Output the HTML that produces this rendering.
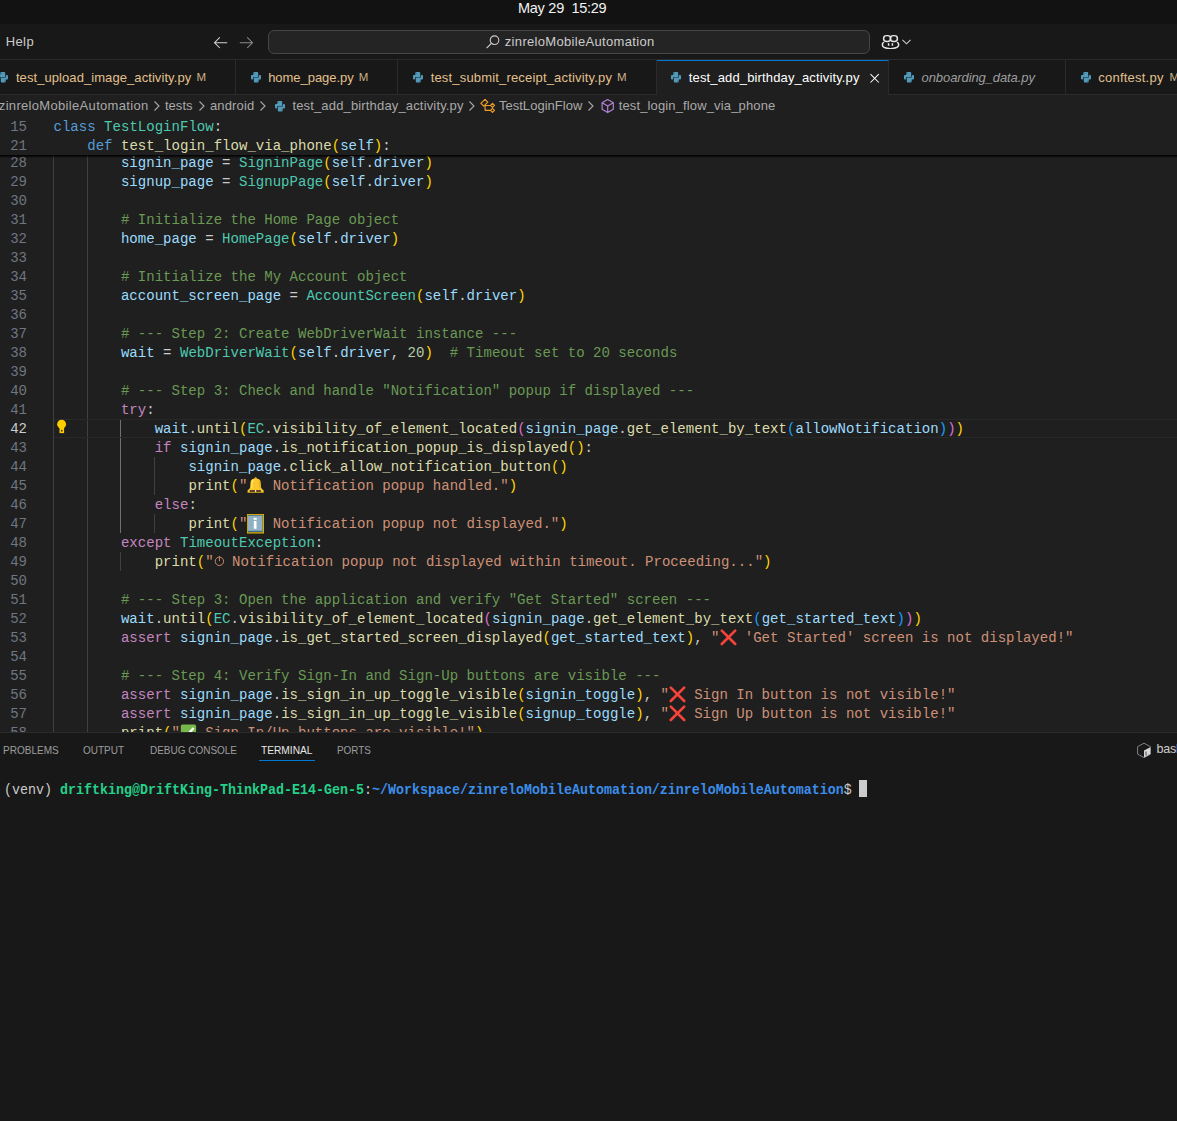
<!DOCTYPE html>
<html><head><meta charset="utf-8">
<style>
*{margin:0;padding:0;box-sizing:border-box}
html,body{width:1177px;height:1121px;overflow:hidden;background:#181818}
body{position:relative;font-family:"Liberation Sans",sans-serif;color:#cccccc}
.a{position:absolute;white-space:pre}
#top{left:0;top:0;width:1177px;height:24px;background:#121212}
#title{left:0;top:24px;width:1177px;height:36px;background:#181818;border-bottom:1px solid #2b2b2b}
#tabs{left:0;top:60px;width:1177px;height:35px;background:#181818;border-bottom:1px solid #2b2b2b}
.tab{position:absolute;top:60px;height:34px;border-right:1px solid #2b2b2b;background:#181818}
.tab.act{background:#1f1f1f;border-top:1px solid #0078d4;height:35px}
.ui{position:absolute;white-space:pre;font-size:13px;line-height:16px}
.tl{color:#e2c08d}
.mk{color:#c9b088;font-size:11.5px}
#crumb{left:0;top:95px;width:1177px;height:22px;background:#1f1f1f}
.bc{color:#a9a9a9}
#editor{left:0;top:116px;width:1177px;height:616px;background:#1f1f1f}
#panel{left:0;top:732px;width:1177px;height:389px;background:#181818;border-top:1px solid #2b2b2b;z-index:5}
.ln,.cl{position:absolute;font-family:"Liberation Mono",monospace;font-size:14.05px;line-height:19px;height:19px;white-space:pre}
.ln{left:0;width:27px;text-align:right;color:#6e7681}
.ln.act{color:#cccccc}
.cl{left:53.5px;color:#cccccc}
.k{color:#569cd6}.c{color:#c586c0}.t{color:#4ec9b0}.f{color:#dcdcaa}.v{color:#9cdcfe}.s{color:#ce9178}.m{color:#6a9955}.n{color:#b5cea8}
.b1{color:#ffd700}.b2{color:#da70d6}.b3{color:#179fff}
.emo{display:inline-block;width:16.84px;height:19px;vertical-align:top;position:relative}
.emo1{display:inline-block;width:9.9px;height:19px;vertical-align:top;position:relative}
.emo svg,.emo1 svg{position:absolute;left:0;top:0}
.g{position:absolute;width:1px;background:#404040}
.g.act{background:#707070}
#sticky{left:0;top:117px;width:1177px;height:38px;background:#1f1f1f;z-index:3}
#shadow{left:0;top:155px;width:1177px;height:3px;background:linear-gradient(#000 0%,rgba(0,0,0,.55) 50%,rgba(0,0,0,0));z-index:3}
.pt{position:absolute;top:743px;font-size:11px;line-height:14px;color:#9d9d9d;white-space:pre}
.term{position:absolute;font-family:"Liberation Mono",monospace;font-size:13.33px;line-height:18px;white-space:pre;z-index:6;transform:scaleY(1.15);transform-origin:0 12.3px}
</style></head><body>
<div class="a" id="top"></div>
<div class="ui" style="left:518.0px;top:-0.3px;font-size:14.5px;color:#f2f2f2;letter-spacing:-0.269px">May 29  15:29</div>

<div class="a" id="title"></div>
<div class="ui" style="left:5.7px;top:34px;color:#cccccc;letter-spacing:0.398px">Help</div>
<svg class="a" style="left:213px;top:34.5px" width="16" height="16" viewBox="0 0 16 16"><path d="M6.8 2.4L1.5 7.7 6.8 13M1.5 7.7H14.2" stroke="#d0d0d0" stroke-width="1.05" fill="none"/></svg>
<svg class="a" style="left:238px;top:34.5px" width="16" height="16" viewBox="0 0 16 16"><path d="M9.2 2.4L14.5 7.7 9.2 13M14.5 7.7H1.8" stroke="#8a8a8a" stroke-width="1.05" fill="none"/></svg>
<div class="a" style="left:268px;top:30px;width:602px;height:24px;border:1px solid #464646;border-radius:6px;background:#242424"></div>
<svg class="a" style="left:485px;top:34px" width="16" height="16" viewBox="0 0 16 16"><circle cx="9.5" cy="6.2" r="4.3" stroke="#cccccc" stroke-width="1.1" fill="none"/><path d="M6.4 9.3L1.6 14.1" stroke="#cccccc" stroke-width="1.2"/></svg>
<div class="ui" style="left:504.8px;top:34px;color:#cccccc;letter-spacing:0.322px">zinreloMobileAutomation</div>
<svg class="a" style="left:881px;top:34px" width="19" height="15" viewBox="0 0 19 17" preserveAspectRatio="none"><path d="M3 9.2C2 9.7 1.4 10.6 1.4 11.7v.9c0 1.1.7 2 1.7 2.5 1.9 1 4 1.4 6.4 1.4s4.5-.4 6.4-1.4c1-.5 1.7-1.4 1.7-2.5v-.9c0-1.1-.6-2-1.6-2.5" fill="none" stroke="#e6e6e6" stroke-width="1.5"/><rect x="2.6" y="1.9" width="7" height="6.6" rx="3.1" fill="none" stroke="#e6e6e6" stroke-width="1.5"/><rect x="9.4" y="1.9" width="7" height="6.6" rx="3.1" fill="none" stroke="#e6e6e6" stroke-width="1.5"/><path d="M7.6 10.6v2.6M11.4 10.6v2.6" stroke="#e6e6e6" stroke-width="1.5"/></svg>
<svg class="a" style="left:901px;top:37px" width="11" height="9" viewBox="0 0 11 9"><path d="M1.5 2.8L5.5 6.8 9.5 2.8" stroke="#cccccc" stroke-width="1.1" fill="none"/></svg>

<div class="a" id="tabs"></div>
<div class="tab" style="left:-20px;width:256px"></div>
<div class="tab" style="left:236px;width:162px"></div>
<div class="tab" style="left:398px;width:259px"></div>
<div class="tab act" style="left:657px;width:232px"></div>
<div class="tab" style="left:889px;width:177px"></div>
<div class="tab" style="left:1066px;width:134px"></div>
<svg class="a" style="left:-4.8px;top:68.7px" width="16" height="16" viewBox="0 0 16 16"><path d="M5.3 4Q5.3 3 6.3 3H9.2Q10.2 3 10.2 4V8H5.2V9.6Q5.2 10.5 4.3 10.5H3.9Q3 10.5 3 9.6V6.9Q3 6 3.9 6H5.3Z" fill="#519aba"/><path d="M10.7 12.5Q10.7 13.5 9.7 13.5H6.8Q5.8 13.5 5.8 12.5V8.5H10.8V6.9Q10.8 6 11.7 6H12.1Q13 6 13 6.9V9.6Q13 10.5 12.1 10.5H10.7Z" fill="#519aba"/><circle cx="6.4" cy="4.2" r=".45" fill="#2a4a5a"/><circle cx="9.6" cy="12.3" r=".45" fill="#2a4a5a"/></svg>
<div class="ui tl" style="left:15.9px;top:70px;letter-spacing:0.075px">test_upload_image_activity.py</div>
<div class="ui mk" style="left:196.6px;top:69.3px">M</div>
<svg class="a" style="left:247.5px;top:68.7px" width="16" height="16" viewBox="0 0 16 16"><path d="M5.3 4Q5.3 3 6.3 3H9.2Q10.2 3 10.2 4V8H5.2V9.6Q5.2 10.5 4.3 10.5H3.9Q3 10.5 3 9.6V6.9Q3 6 3.9 6H5.3Z" fill="#519aba"/><path d="M10.7 12.5Q10.7 13.5 9.7 13.5H6.8Q5.8 13.5 5.8 12.5V8.5H10.8V6.9Q10.8 6 11.7 6H12.1Q13 6 13 6.9V9.6Q13 10.5 12.1 10.5H10.7Z" fill="#519aba"/><circle cx="6.4" cy="4.2" r=".45" fill="#2a4a5a"/><circle cx="9.6" cy="12.3" r=".45" fill="#2a4a5a"/></svg>
<div class="ui tl" style="left:268.2px;top:70px;letter-spacing:-0.046px">home_page.py</div>
<div class="ui mk" style="left:358.8px;top:69.3px">M</div>
<svg class="a" style="left:409.7px;top:68.7px" width="16" height="16" viewBox="0 0 16 16"><path d="M5.3 4Q5.3 3 6.3 3H9.2Q10.2 3 10.2 4V8H5.2V9.6Q5.2 10.5 4.3 10.5H3.9Q3 10.5 3 9.6V6.9Q3 6 3.9 6H5.3Z" fill="#519aba"/><path d="M10.7 12.5Q10.7 13.5 9.7 13.5H6.8Q5.8 13.5 5.8 12.5V8.5H10.8V6.9Q10.8 6 11.7 6H12.1Q13 6 13 6.9V9.6Q13 10.5 12.1 10.5H10.7Z" fill="#519aba"/><circle cx="6.4" cy="4.2" r=".45" fill="#2a4a5a"/><circle cx="9.6" cy="12.3" r=".45" fill="#2a4a5a"/></svg>
<div class="ui tl" style="left:430.7px;top:70px;letter-spacing:0.171px">test_submit_receipt_activity.py</div>
<div class="ui mk" style="left:617px;top:69.3px">M</div>
<svg class="a" style="left:668px;top:68.7px" width="16" height="16" viewBox="0 0 16 16"><path d="M5.3 4Q5.3 3 6.3 3H9.2Q10.2 3 10.2 4V8H5.2V9.6Q5.2 10.5 4.3 10.5H3.9Q3 10.5 3 9.6V6.9Q3 6 3.9 6H5.3Z" fill="#519aba"/><path d="M10.7 12.5Q10.7 13.5 9.7 13.5H6.8Q5.8 13.5 5.8 12.5V8.5H10.8V6.9Q10.8 6 11.7 6H12.1Q13 6 13 6.9V9.6Q13 10.5 12.1 10.5H10.7Z" fill="#519aba"/><circle cx="6.4" cy="4.2" r=".45" fill="#2a4a5a"/><circle cx="9.6" cy="12.3" r=".45" fill="#2a4a5a"/></svg>
<div class="ui" style="left:688.8px;top:70px;color:#ffffff;letter-spacing:0.143px">test_add_birthday_activity.py</div>
<svg class="a" style="left:867px;top:69.6px" width="16" height="16" viewBox="0 0 16 16"><path d="M3.5 4.2L11.8 12.5M11.8 4.2L3.5 12.5" stroke="#ffffff" stroke-width="1.05"/></svg>
<svg class="a" style="left:901px;top:68.7px" width="16" height="16" viewBox="0 0 16 16"><path d="M5.3 4Q5.3 3 6.3 3H9.2Q10.2 3 10.2 4V8H5.2V9.6Q5.2 10.5 4.3 10.5H3.9Q3 10.5 3 9.6V6.9Q3 6 3.9 6H5.3Z" fill="#519aba"/><path d="M10.7 12.5Q10.7 13.5 9.7 13.5H6.8Q5.8 13.5 5.8 12.5V8.5H10.8V6.9Q10.8 6 11.7 6H12.1Q13 6 13 6.9V9.6Q13 10.5 12.1 10.5H10.7Z" fill="#519aba"/><circle cx="6.4" cy="4.2" r=".45" fill="#2a4a5a"/><circle cx="9.6" cy="12.3" r=".45" fill="#2a4a5a"/></svg>
<div class="ui" style="left:921.6px;top:70px;color:#9d9d9d;font-style:italic;letter-spacing:-0.096px">onboarding_data.py</div>
<svg class="a" style="left:1077.6px;top:68.7px" width="16" height="16" viewBox="0 0 16 16"><path d="M5.3 4Q5.3 3 6.3 3H9.2Q10.2 3 10.2 4V8H5.2V9.6Q5.2 10.5 4.3 10.5H3.9Q3 10.5 3 9.6V6.9Q3 6 3.9 6H5.3Z" fill="#519aba"/><path d="M10.7 12.5Q10.7 13.5 9.7 13.5H6.8Q5.8 13.5 5.8 12.5V8.5H10.8V6.9Q10.8 6 11.7 6H12.1Q13 6 13 6.9V9.6Q13 10.5 12.1 10.5H10.7Z" fill="#519aba"/><circle cx="6.4" cy="4.2" r=".45" fill="#2a4a5a"/><circle cx="9.6" cy="12.3" r=".45" fill="#2a4a5a"/></svg>
<div class="ui tl" style="left:1098.3px;top:70px;letter-spacing:0.223px">conftest.py</div>
<div class="ui mk" style="left:1169.4px;top:69.3px">M</div>

<div class="a" id="crumb"></div>
<div class="ui bc" style="left:-1.2px;top:98px;letter-spacing:0.322px">zinreloMobileAutomation</div>
<svg class="a" style="left:153px;top:99px" width="8" height="14" viewBox="0 0 8 14"><path d="M1.5 2.5L6 7 1.5 11.5" stroke="#a9a9a9" stroke-width="1.1" fill="none"/></svg>
<div class="ui bc" style="left:165px;top:98px;letter-spacing:0.012px">tests</div>
<svg class="a" style="left:198px;top:99px" width="8" height="14" viewBox="0 0 8 14"><path d="M1.5 2.5L6 7 1.5 11.5" stroke="#a9a9a9" stroke-width="1.1" fill="none"/></svg>
<div class="ui bc" style="left:210px;top:98px;letter-spacing:0.144px">android</div>
<svg class="a" style="left:259px;top:99px" width="8" height="14" viewBox="0 0 8 14"><path d="M1.5 2.5L6 7 1.5 11.5" stroke="#a9a9a9" stroke-width="1.1" fill="none"/></svg>
<svg class="a" style="left:272px;top:98px" width="16" height="16" viewBox="0 0 16 16"><path d="M5.3 4Q5.3 3 6.3 3H9.2Q10.2 3 10.2 4V8H5.2V9.6Q5.2 10.5 4.3 10.5H3.9Q3 10.5 3 9.6V6.9Q3 6 3.9 6H5.3Z" fill="#519aba"/><path d="M10.7 12.5Q10.7 13.5 9.7 13.5H6.8Q5.8 13.5 5.8 12.5V8.5H10.8V6.9Q10.8 6 11.7 6H12.1Q13 6 13 6.9V9.6Q13 10.5 12.1 10.5H10.7Z" fill="#519aba"/><circle cx="6.4" cy="4.2" r=".45" fill="#2a4a5a"/><circle cx="9.6" cy="12.3" r=".45" fill="#2a4a5a"/></svg>
<div class="ui bc" style="left:292.4px;top:98px;letter-spacing:0.158px">test_add_birthday_activity.py</div>
<svg class="a" style="left:468px;top:99px" width="8" height="14" viewBox="0 0 8 14"><path d="M1.5 2.5L6 7 1.5 11.5" stroke="#a9a9a9" stroke-width="1.1" fill="none"/></svg>
<svg class="a" style="left:474px;top:96px" width="26" height="20" viewBox="0 0 26 20"><path d="M6.9 7.4L11 3.3 13.8 6.1 9.7 10.2Z" stroke="#ee9d28" stroke-width="1.2" fill="none" stroke-linejoin="round"/><path d="M11.1 9.2V14.3H16.6M11.1 9.5H16.6M16.5 9.4L18.5 7.4 20.5 9.4 18.5 11.4ZM16.5 14.3L18.5 12.3 20.5 14.3 18.5 16.3Z" stroke="#ee9d28" stroke-width="1.2" fill="none" stroke-linejoin="round"/></svg>
<div class="ui bc" style="left:498.9px;top:98px;letter-spacing:0.033px">TestLoginFlow</div>
<svg class="a" style="left:587px;top:99px" width="8" height="14" viewBox="0 0 8 14"><path d="M1.5 2.5L6 7 1.5 11.5" stroke="#a9a9a9" stroke-width="1.1" fill="none"/></svg>
<svg class="a" style="left:600px;top:98px" width="16" height="16" viewBox="0 0 16 16"><path d="M7.7 1.6l5.6 3.2v6.5L7.7 14.6 2.1 11.3V4.8zM2.1 4.8l5.6 3.2 5.6-3.2M7.7 8v6.6" stroke="#b180d7" stroke-width="1.2" fill="none" stroke-linejoin="round"/></svg>
<div class="ui bc" style="left:618.7px;top:98px;letter-spacing:0.138px">test_login_flow_via_phone</div>

<div class="a" id="editor"></div>
<div class="g" style="left:53px;top:154px;height:578px"></div>
<div class="g" style="left:87px;top:154px;height:578px"></div>
<div class="g act" style="left:120px;top:419px;height:114px"></div>
<div class="g" style="left:154px;top:457px;height:38px"></div>
<div class="g" style="left:154px;top:514px;height:19px"></div>
<div class="g" style="left:120px;top:552px;height:19px"></div>
<div class="a" style="left:54px;top:419px;width:1123px;height:19px;border-top:1px solid #282828;border-bottom:1px solid #282828"></div>
<svg class="a" style="left:56px;top:419px" width="11" height="16" viewBox="0 0 11 16"><circle cx="5.6" cy="5.2" r="4.45" fill="#ffcc00"/><path d="M3.5 7.5H8.1V14.1H3.5Z" fill="#ffcc00"/><circle cx="5.8" cy="11.7" r=".85" fill="#1f1f1f"/></svg>
<div class="ln" style="top:154px">28</div>
<div class="cl" style="top:154px">        <span class="v">signin_page</span> = <span class="t">SigninPage</span><span class="b1">(</span><span class="v">self</span>.<span class="v">driver</span><span class="b1">)</span></div>
<div class="ln" style="top:173px">29</div>
<div class="cl" style="top:173px">        <span class="v">signup_page</span> = <span class="t">SignupPage</span><span class="b1">(</span><span class="v">self</span>.<span class="v">driver</span><span class="b1">)</span></div>
<div class="ln" style="top:192px">30</div>
<div class="ln" style="top:211px">31</div>
<div class="cl" style="top:211px">        <span class="m"># Initialize the Home Page object</span></div>
<div class="ln" style="top:230px">32</div>
<div class="cl" style="top:230px">        <span class="v">home_page</span> = <span class="t">HomePage</span><span class="b1">(</span><span class="v">self</span>.<span class="v">driver</span><span class="b1">)</span></div>
<div class="ln" style="top:249px">33</div>
<div class="ln" style="top:268px">34</div>
<div class="cl" style="top:268px">        <span class="m"># Initialize the My Account object</span></div>
<div class="ln" style="top:287px">35</div>
<div class="cl" style="top:287px">        <span class="v">account_screen_page</span> = <span class="t">AccountScreen</span><span class="b1">(</span><span class="v">self</span>.<span class="v">driver</span><span class="b1">)</span></div>
<div class="ln" style="top:306px">36</div>
<div class="ln" style="top:325px">37</div>
<div class="cl" style="top:325px">        <span class="m"># --- Step 2: Create WebDriverWait instance ---</span></div>
<div class="ln" style="top:344px">38</div>
<div class="cl" style="top:344px">        <span class="v">wait</span> = <span class="t">WebDriverWait</span><span class="b1">(</span><span class="v">self</span>.<span class="v">driver</span>, <span class="n">20</span><span class="b1">)</span>  <span class="m"># Timeout set to 20 seconds</span></div>
<div class="ln" style="top:363px">39</div>
<div class="ln" style="top:382px">40</div>
<div class="cl" style="top:382px">        <span class="m"># --- Step 3: Check and handle &quot;Notification&quot; popup if displayed ---</span></div>
<div class="ln" style="top:401px">41</div>
<div class="cl" style="top:401px">        <span class="c">try</span>:</div>
<div class="ln act" style="top:420px">42</div>
<div class="cl" style="top:420px">            <span class="v">wait</span>.<span class="f">until</span><span class="b1">(</span><span class="t">EC</span>.<span class="f">visibility_of_element_located</span><span class="b2">(</span><span class="v">signin_page</span>.<span class="f">get_element_by_text</span><span class="b3">(</span><span class="v">allowNotification</span><span class="b3">)</span><span class="b2">)</span><span class="b1">)</span></div>
<div class="ln" style="top:439px">43</div>
<div class="cl" style="top:439px">            <span class="c">if</span> <span class="v">signin_page</span>.<span class="f">is_notification_popup_is_displayed</span><span class="b1">()</span>:</div>
<div class="ln" style="top:458px">44</div>
<div class="cl" style="top:458px">                <span class="v">signin_page</span>.<span class="f">click_allow_notification_button</span><span class="b1">()</span></div>
<div class="ln" style="top:477px">45</div>
<div class="cl" style="top:477px">                <span class="f">print</span><span class="b1">(</span><span class="s">&quot;</span><span class="emo"><svg width="17" height="19" viewBox="0 0 17 19"><circle cx="8.6" cy="1.4" r="1.2" fill="#f0b818"/><path d="M3.6 4.6Q4.2 1.6 8.6 1.6Q13 1.6 13.6 4.6L14.1 10.4Q14.5 12 16.6 13.2V15.6H0.6V13.2Q2.7 12 3.1 10.4Z" fill="#fcc72c"/><path d="M4.6 4.2Q5.2 2.4 7.4 2.2Q5.6 4 5.3 11.6L4.2 11.8Z" fill="#fff27a" opacity=".8"/><path d="M11.8 3.2Q13.2 4 13.3 6L13.7 11.2 12.6 11.4Z" fill="#e2a40e" opacity=".8"/><rect x="0.6" y="15" width="16" height="0.9" fill="#b3901e"/><rect x="2.7" y="13.1" width="5.3" height="1.8" fill="#4e3227"/><rect x="9.1" y="13.1" width="4.8" height="1.8" fill="#4e3227"/><rect x="8" y="13.3" width="1.1" height="1.6" fill="#fff2b0"/></svg></span><span class="s"> Notification popup handled.&quot;</span><span class="b1">)</span></div>
<div class="ln" style="top:496px">46</div>
<div class="cl" style="top:496px">            <span class="c">else</span>:</div>
<div class="ln" style="top:515px">47</div>
<div class="cl" style="top:515px">                <span class="f">print</span><span class="b1">(</span><span class="s">&quot;</span><span class="emo"><svg style="top:-1px" width="17" height="20" viewBox="0 0 17 20"><rect x="0.9" y="1" width="14.8" height="17.2" fill="#8fb1c3"/><rect x="0.9" y="1" width="14.8" height="0.7" fill="#4d6b7c"/><rect x="0.9" y="16.8" width="14.8" height="1.4" fill="#3d6a80"/><rect x="6.6" y="3.9" width="3.1" height="1.9" fill="#fff"/><rect x="6.8" y="7" width="2.7" height="7.8" fill="#fff"/><rect x="0.25" y="0.3" width="16.3" height="18.6" fill="none" stroke="#d8b000" stroke-width="1.3"/></svg></span><span class="s"> Notification popup not displayed.&quot;</span><span class="b1">)</span></div>
<div class="ln" style="top:534px">48</div>
<div class="cl" style="top:534px">        <span class="c">except</span> <span class="t">TimeoutException</span>:</div>
<div class="ln" style="top:553px">49</div>
<div class="cl" style="top:553px">            <span class="f">print</span><span class="b1">(</span><span class="s">&quot;</span><span class="emo1"><svg style="top:-1px" width="11" height="19" viewBox="0 0 11 19"><circle cx="5.4" cy="9.3" r="4.2" fill="none" stroke="#c98a6a" stroke-width="1"/><path d="M5.4 5.6V9.2M5.4 4.1V5.2" stroke="#c98a6a" stroke-width="1"/></svg></span><span class="s"> Notification popup not displayed within timeout. Proceeding...&quot;</span><span class="b1">)</span></div>
<div class="ln" style="top:572px">50</div>
<div class="ln" style="top:591px">51</div>
<div class="cl" style="top:591px">        <span class="m"># --- Step 3: Open the application and verify &quot;Get Started&quot; screen ---</span></div>
<div class="ln" style="top:610px">52</div>
<div class="cl" style="top:610px">        <span class="v">wait</span>.<span class="f">until</span><span class="b1">(</span><span class="t">EC</span>.<span class="f">visibility_of_element_located</span><span class="b2">(</span><span class="v">signin_page</span>.<span class="f">get_element_by_text</span><span class="b3">(</span><span class="v">get_started_text</span><span class="b3">)</span><span class="b2">)</span><span class="b1">)</span></div>
<div class="ln" style="top:629px">53</div>
<div class="cl" style="top:629px">        <span class="c">assert</span> <span class="v">signin_page</span>.<span class="f">is_get_started_screen_displayed</span><span class="b1">(</span><span class="v">get_started_text</span><span class="b1">)</span>, <span class="s">&quot;</span><span class="emo"><svg width="17" height="19" viewBox="0 0 17 19"><path d="M1.8 1.6L15.2 15M15.2 1.6L1.8 15" stroke="#f5443a" stroke-width="2.6" stroke-linecap="round"/></svg></span><span class="s"> &#x27;Get Started&#x27; screen is not displayed!&quot;</span></div>
<div class="ln" style="top:648px">54</div>
<div class="ln" style="top:667px">55</div>
<div class="cl" style="top:667px">        <span class="m"># --- Step 4: Verify Sign-In and Sign-Up buttons are visible ---</span></div>
<div class="ln" style="top:686px">56</div>
<div class="cl" style="top:686px">        <span class="c">assert</span> <span class="v">signin_page</span>.<span class="f">is_sign_in_up_toggle_visible</span><span class="b1">(</span><span class="v">signin_toggle</span><span class="b1">)</span>, <span class="s">&quot;</span><span class="emo"><svg width="17" height="19" viewBox="0 0 17 19"><path d="M1.8 1.6L15.2 15M15.2 1.6L1.8 15" stroke="#f5443a" stroke-width="2.6" stroke-linecap="round"/></svg></span><span class="s"> Sign In button is not visible!&quot;</span></div>
<div class="ln" style="top:705px">57</div>
<div class="cl" style="top:705px">        <span class="c">assert</span> <span class="v">signin_page</span>.<span class="f">is_sign_in_up_toggle_visible</span><span class="b1">(</span><span class="v">signup_toggle</span><span class="b1">)</span>, <span class="s">&quot;</span><span class="emo"><svg width="17" height="19" viewBox="0 0 17 19"><path d="M1.8 1.6L15.2 15M15.2 1.6L1.8 15" stroke="#f5443a" stroke-width="2.6" stroke-linecap="round"/></svg></span><span class="s"> Sign Up button is not visible!&quot;</span></div>
<div class="ln" style="top:724px">58</div>
<div class="cl" style="top:724px">        <span class="f">print</span><span class="b1">(</span><span class="s">&quot;</span><span class="emo"><svg width="17" height="19" viewBox="0 0 17 19"><rect x="0.8" y="0.6" width="15.3" height="15.3" rx="1.6" fill="#77b84a"/><path d="M4.2 8.4L7 11.2 13.6 4" stroke="#fff" stroke-width="2.4" fill="none"/></svg></span><span class="s"> Sign In/Up buttons are visible!&quot;</span><span class="b1">)</span></div>
<div class="a" id="sticky"></div>
<div class="ln" style="top:118px;z-index:4">15</div>
<div class="cl" style="top:118px;z-index:4"><span class="k">class</span> <span class="t">TestLoginFlow</span>:</div>
<div class="ln" style="top:137px;z-index:4">21</div>
<div class="cl" style="top:137px;z-index:4">    <span class="k">def</span> <span class="f">test_login_flow_via_phone</span><span class="b1">(</span><span class="v">self</span><span class="b1">)</span>:</div>
<div class="a" id="shadow"></div>

<div class="a" id="panel"></div>
<div class="pt" style="left:3.4px;z-index:6;transform:scaleX(0.913);transform-origin:0 0">PROBLEMS</div>
<div class="pt" style="left:83.3px;z-index:6;transform:scaleX(0.9077);transform-origin:0 0">OUTPUT</div>
<div class="pt" style="left:149.5px;z-index:6;transform:scaleX(0.9066);transform-origin:0 0">DEBUG CONSOLE</div>
<div class="pt" style="left:261.3px;z-index:6;color:#e7e7e7;transform:scaleX(0.9261);transform-origin:0 0">TERMINAL</div>
<div class="a" style="left:259px;top:760px;width:56px;height:1px;background:#0078d4;z-index:6"></div>
<div class="pt" style="left:337.1px;z-index:6;transform:scaleX(0.8994);transform-origin:0 0">PORTS</div>
<svg class="a" style="left:1136px;top:741.5px;z-index:6" width="16" height="17" viewBox="0 0 16 17"><path d="M8 1.2L14.4 4.7v7.4L8 15.6 1.6 12.1V4.7z" fill="none" stroke="#8c8c8c" stroke-width="0.9"/><path d="M8 8.6L14.3 5.2v7L8 15.6z" fill="#d8d8d8"/><path d="M10 9.6v3.8" stroke="#5a4a6a" stroke-width="1.1"/><rect x="12" y="12.4" width="1.2" height="0.9" fill="#8090b0"/></svg>
<div class="ui" style="left:1156.5px;top:741.2px;z-index:6;color:#cccccc;font-size:12.6px;letter-spacing:-0.3px">bash</div>
<div class="term" style="left:4px;top:782px"><span style="color:#cccccc">(venv) </span><span style="color:#23d18b;font-weight:700">driftking@DriftKing-ThinkPad-E14-Gen-5</span><span style="color:#cccccc">:</span><span style="color:#3b8eea;font-weight:700">~/Workspace/zinreloMobileAutomation/zinreloMobileAutomation</span><span style="color:#cccccc">$ </span></div>
<div class="a" style="left:859px;top:780px;width:8px;height:17px;background:#cccccc;z-index:6"></div>
</body></html>
